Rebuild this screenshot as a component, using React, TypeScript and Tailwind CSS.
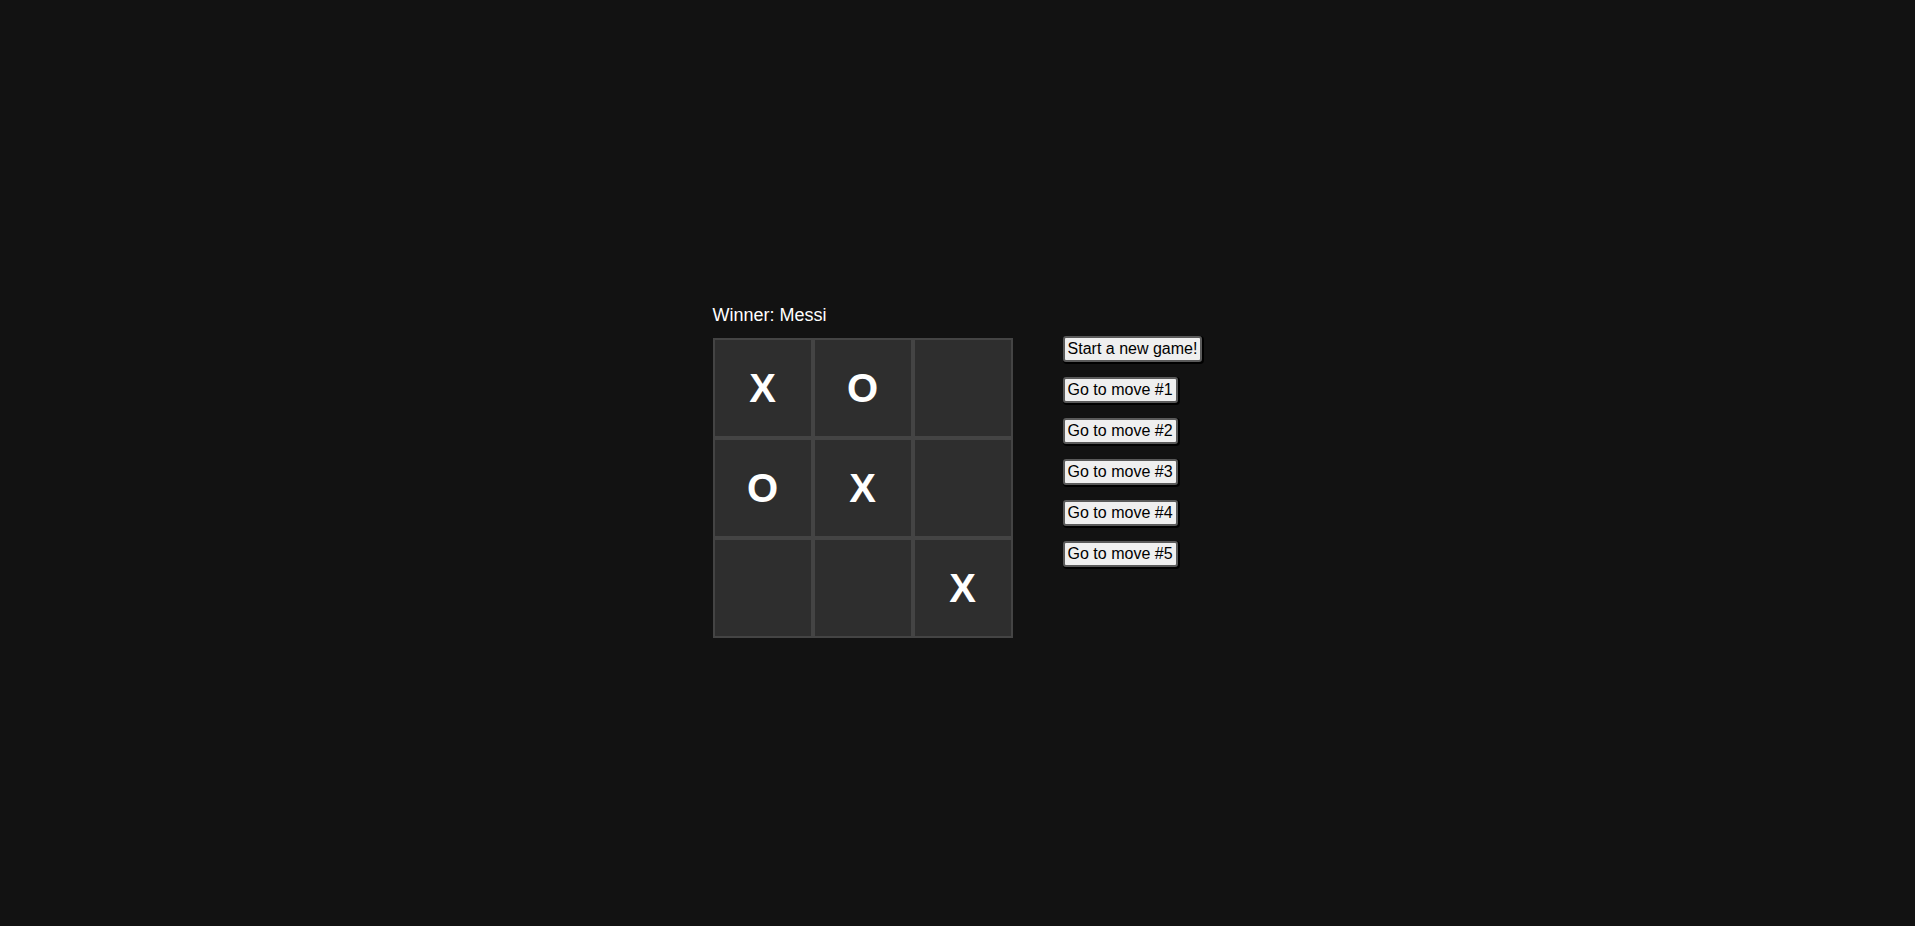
const squares = ["X", "O", "", "O", "X", "", "", "", "X"];
const moves = ["Start a new game!", "Go to move #1", "Go to move #2", "Go to move #3", "Go to move #4", "Go to move #5"];

function Square({ value }: { value: string }) {
	return (
		<button className="w-[100px] h-[100px] border-2 border-[#444444] bg-[#2e2e2e] text-white text-[40px] font-bold flex items-center justify-center leading-none">
			{value}
		</button>
	);
}

export default function App() {
	return (
		<div
			className="h-screen w-full bg-[#121212] flex items-center justify-center pt-[17px]"
			style={{ fontFamily: '"Liberation Sans", Arial, sans-serif' }}
		>
			<div className="flex items-start">
				{/* Board */}
				<div className="flex flex-col">
					<div className="text-white text-[18px] leading-[21px] mb-3">Winner: Messi</div>
					<div className="grid grid-cols-3 w-[300px]">
						{squares.map((s, i) => (
							<Square key={i} value={s} />
						))}
					</div>
				</div>
				{/* Moves */}
				<ol className="ml-[50px] mt-[31px] flex flex-col gap-[15px]">
					{moves.map((m) => (
						<li key={m}>
							<button className="bg-[#efefef] text-black text-[16px] leading-[18px] border-2 border-[#5a5a5a] rounded-[3px] px-[3px] py-[2px] shadow-[1px_1px_0_1px_#000]">
								{m}
							</button>
						</li>
					))}
				</ol>
			</div>
		</div>
	);
}
